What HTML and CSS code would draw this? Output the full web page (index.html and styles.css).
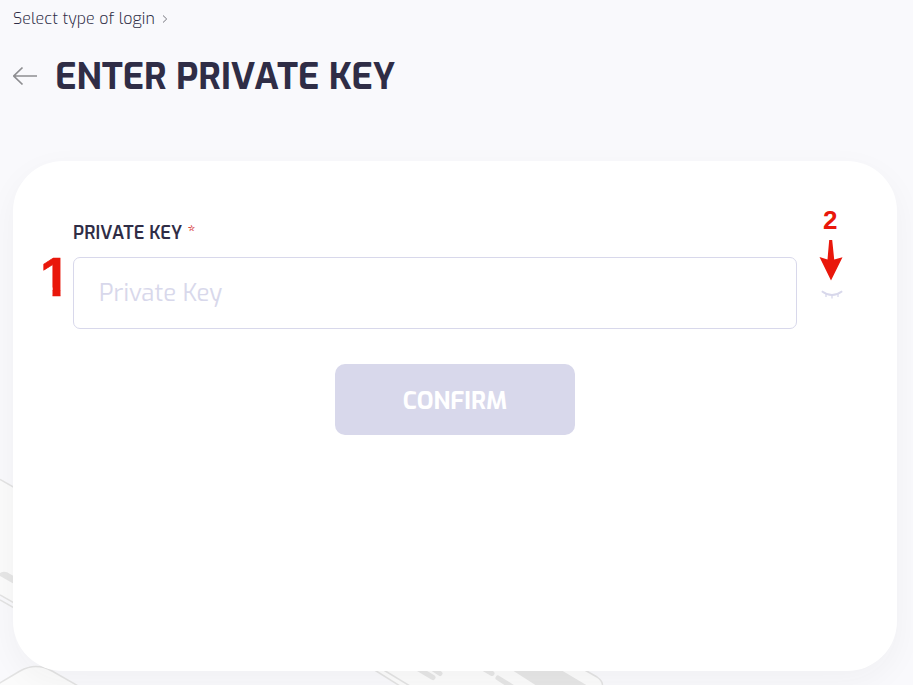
FILE: index.html
```html
<!DOCTYPE html>
<html lang="en">
<head>
<meta charset="utf-8">
<title>Enter private key</title>
<link rel="stylesheet" href="styles.css">
</head>
<body>
<svg class="backdrop" viewBox="0 0 913 685" aria-hidden="true">
  <path class="panel" d="M0 480L110 543V660L0 596Z"/>
  <path class="line" d="M0 479.500L30 496.500M0 595L30 612M0 600L30 617"/>
  <path class="bar" d="M0 573Q5 570 10 574L30 585V593L0 576Z"/>
  <path class="panel" d="M0 683L20 671Q36 662 52 671L80 687H0Z"/>
  <path class="line" d="M-2 684L20 671Q36 662 52 671L80 687"/>
  <path class="panel" d="M373 669H583L597 677Q604 682 602 687H400Z"/>
  <path class="line" d="M373 669L400 686M382 669L410 686M583 669L597 677Q604 682 602 687"/>
  <path class="stroke" d="M417 668L433 677.500M430 667L440 673.500M481 667L492 673.500M498 678L514 688"/>
  <path class="bar" d="M512 670H561L588 686H537Z"/>
</svg>
<header class="header">
  <nav class="crumbs"><span>Select type of login</span><svg width="6" height="10" viewBox="0 0 6 10"><path d="M1 1.500L4.700 5L1 8.500"/></svg></nav>
  <div class="heading">
    <svg class="back" width="26" height="20" viewBox="0 0 26 20"><path d="M24 10H1M9.500 1.500L.800 10L9.500 18.500"/></svg>
    <h1>ENTER PRIVATE KEY</h1>
  </div>
</header>
<main class="card">
  <label class="label" for="key"><span class="label-text">PRIVATE KEY</span><span class="required">*</span></label>
  <div class="field">
    <input id="key" class="input" type="text" placeholder="Private Key">
    <svg class="eye" width="22" height="9" viewBox="0 0 22 9"><path class="lid" d="M.800 1.300Q11 8.700 21.200 1.300"/><path d="M5 4V7M11 5V8.500M17 4V7"/></svg>
    <span class="mark mark-one">1</span>
    <span class="mark mark-two">2</span>
    <svg class="pointer" width="24" height="42" viewBox="0 0 24 42"><path d="M10.200 1H13.200L15.200 20.500L23.500 18.200L12 41.500L.500 18L8.500 20.500Z"/></svg>
  </div>
  <button class="confirm" type="button"><span>CONFIRM</span></button>
</main>
</body>
</html>
```
FILE: styles.css
```css
* { box-sizing: border-box; }
body {
  margin: 0;
  height: 685px;
  overflow: hidden;
  padding: 0 16px 0 13px;
  background: #f9f9fc;
  color: #2f2d46;
  font-family: Exo, "Exo 2", Roboto, sans-serif;
}
.backdrop { position: absolute; inset: 0; width: 913px; height: 685px; z-index: -1; fill: none; }
.backdrop .panel { fill: #fbfbfb; }
.backdrop .line { stroke: #e3e3e3; stroke-width: 1.5; }
.backdrop .bar { fill: #e6e6e6; }
.backdrop .stroke { stroke: #e6e6e6; stroke-width: 5; stroke-linecap: round; }
.header { height: 160.500px; }
.crumbs {
  display: flex;
  align-items: center;
  gap: 7.500px;
  height: 37px;
  font-size: 16px;
  font-weight: 300;
  letter-spacing: .04px;
}
.crumbs svg { fill: none; stroke: #77777f; margin-top: 1px; }
.heading { display: flex; align-items: center; gap: 16px; height: 77px; }
.back { fill: none; stroke: #8e8e91; stroke-width: 1.7; }
h1 { margin: 3px 0 0; font-size: 36px; line-height: 44px; font-weight: 700; white-space: nowrap; }
.card {
  height: 510px;
  padding: 60px;
  border-radius: 50px;
  background: #fff;
  box-shadow: 0 10px 32px rgba(40, 40, 50, .045);
}
.label { display: flex; gap: 5px; height: 36px; line-height: 25px; font-size: 18px; font-weight: 600; }
.label-text { letter-spacing: .08px; }
.required { color: #d8453f; font-weight: 500; }
.field { position: relative; display: flex; align-items: center; gap: 24px; height: 72px; }
.input {
  flex: 0 0 724px;
  height: 72px;
  padding: 0 25px;
  border: 1px solid #d8d8eb;
  border-radius: 7px;
  background: #fff;
  font: 400 24px Exo, "Exo 2", Roboto, sans-serif;
  outline: 0;
}
.input::placeholder { color: #d8d8eb; opacity: 1; }
.eye { flex: none; margin: 4px 0 0 -.500px; fill: none; stroke: #d8d8eb; stroke-width: 1.3; }
.eye .lid { stroke-width: 1.8; }
.mark { position: absolute; color: #e9170b; font-family: "Liberation Sans", sans-serif; font-weight: 700; line-height: 1; }
.mark-one {
  left: -33px;
  top: -7px;
  font-size: 55px;
  -webkit-text-stroke: .6px #e9170b;
  clip-path: polygon(0 0, 20.500px 0, 20.500px 100%, 12.500px 100%, 12.500px 38px, 0 38px);
}
.mark-two { left: 750px; top: -50px; font-size: 26px; }
.pointer { position: absolute; left: 746px; top: -17.500px; fill: #e9170b; }
.confirm {
  display: block;
  width: 240px;
  height: 71px;
  margin: 35.500px auto 0;
  padding: 2px 0 0;
  border: 0;
  border-radius: 10px;
  background: #d8d8eb;
  color: #fff;
  font: 700 24px Exo, "Exo 2", Roboto, sans-serif;
}
```
